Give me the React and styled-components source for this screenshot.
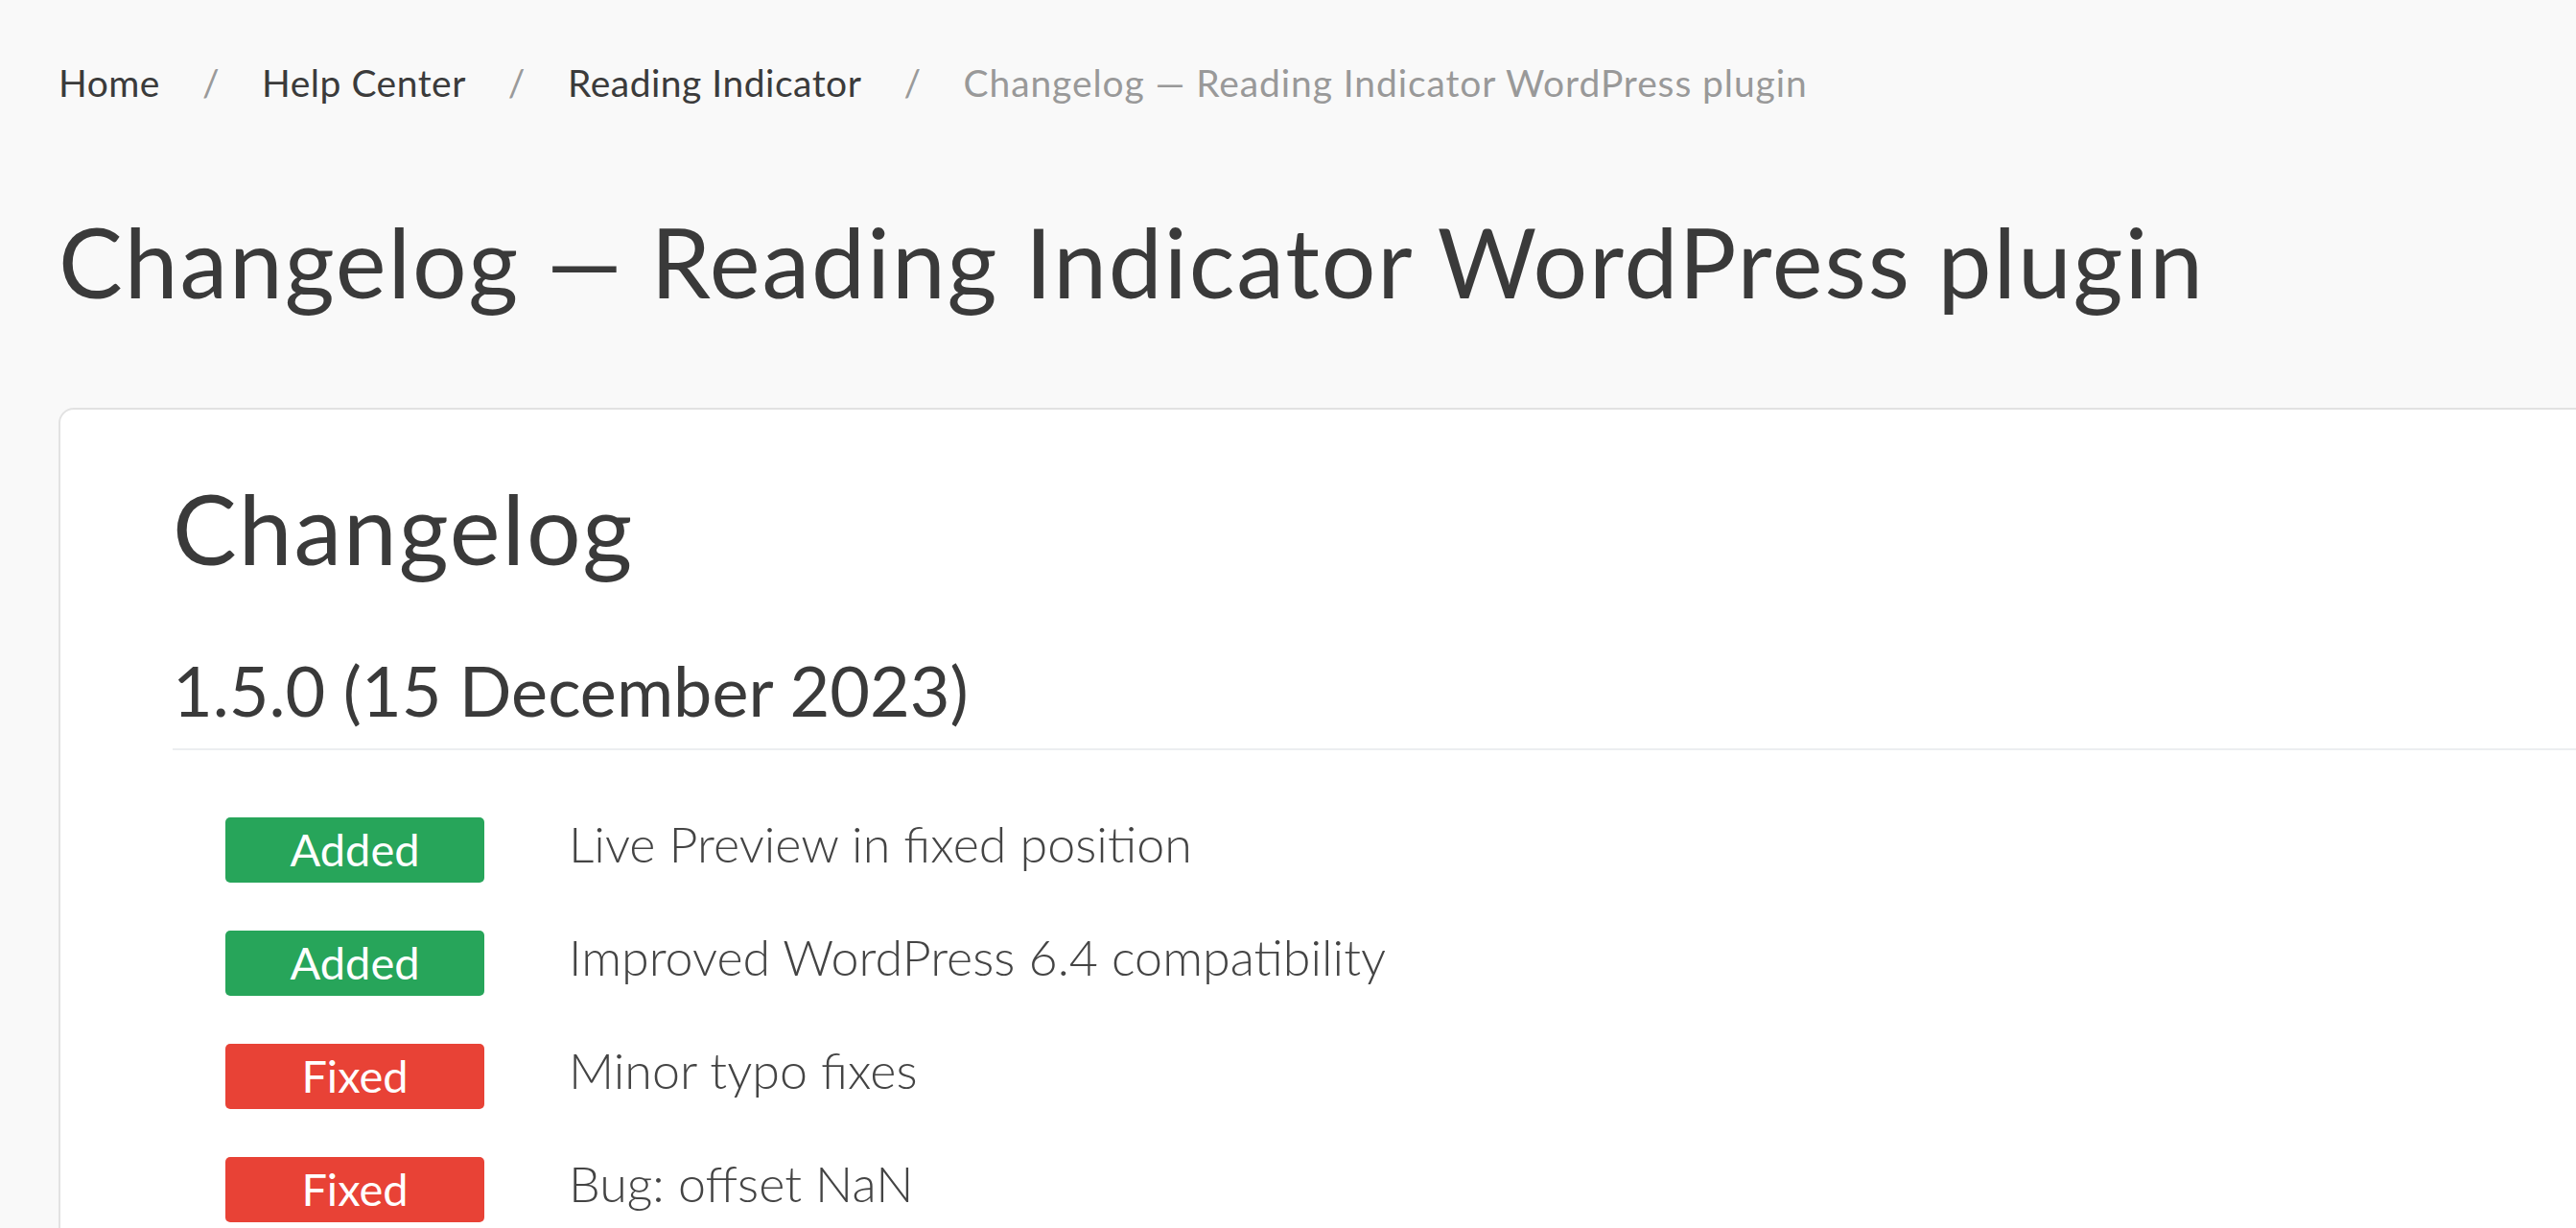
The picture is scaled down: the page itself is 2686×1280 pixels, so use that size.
import React from 'react'
import styled, { createGlobalStyle } from 'styled-components'

const GlobalStyle = createGlobalStyle`
    html, body {
        margin: 0;
        padding: 0;
        background-color: #f9f9f9;
        overflow: hidden;
    }
    body {
        font-family: Lato, "Open Sans", sans-serif;
        color: #3b3b3b;
    }
`

const Page = styled.div`
    display: flex;
    flex-direction: column;
    padding: 58px 0 0 61px;
`
const Crumbs = styled.nav`
    display: flex;
    align-items: center;
    height: 56px;
    font-size: 39px;
    line-height: 56px;
    letter-spacing: 0.5px;
`
const Crumb = styled.span`
    color: ${(props) => props.current ? '#999999' : '#3b3b3b'};
    letter-spacing: ${(props) => props.current ? '0.9px' : '0.5px'};
`
const Slash = styled.span`
    color: #9a9a9a;
    margin: 0 44px;
`
const Title = styled.h1`
    margin: 98px 0 0 0;
    font-size: 100px;
    font-weight: 400;
    line-height: 1.2;
    letter-spacing: 1.9px;
    color: #3a3a3a;
`
const Card = styled.section`
    margin: 93px -60px 0 0;
    padding: 63px 0 200px 117px;
    background-color: #ffffff;
    border: 2px solid #e2e2e2;
    border-radius: 16px;
`
const CardHeading = styled.h2`
    margin: 0;
    font-size: 100px;
    font-weight: 400;
    line-height: 1.2;
    letter-spacing: 1.9px;
    color: #3a3a3a;
`
const Version = styled.h3`
    margin: 66px 0 0 0;
    padding-bottom: 18px;
    font-size: 72px;
    font-weight: 400;
    line-height: 1.2;
    color: #3a3a3a;
    border-bottom: 2px solid #eceef0;
`
const List = styled.ul`
    list-style: none;
    margin: 70px 0 0 0;
    padding: 0 0 0 55px;
    display: flex;
    flex-direction: column;
    gap: 50px;
`
const Row = styled.li`
    display: flex;
    align-items: center;
    height: 68px;
    gap: 88px;
`
const Badge = styled.span`
    flex: none;
    width: 270px;
    height: 68px;
    display: flex;
    align-items: center;
    justify-content: center;
    border-radius: 5px;
    background-color: ${(props) => props.kind === 'fixed' ? '#e84236' : '#27a55a'};
    color: #ffffff;
    font-size: 47px;
    padding-bottom: 3px;
    box-sizing: border-box;
`
const Text = styled.span`
    font-size: 52px;
    font-weight: 300;
    line-height: 62px;
    color: #444444;
    margin-bottom: 14px;
`

const items = [
    { kind: 'added', label: 'Added', text: 'Live Preview in fixed position' },
    { kind: 'added', label: 'Added', text: 'Improved WordPress 6.4 compatibility' },
    { kind: 'fixed', label: 'Fixed', text: 'Minor typo fixes' },
    { kind: 'fixed', label: 'Fixed', text: 'Bug: offset NaN' },
]

const App = () => {
  return (
    <Page>
        <GlobalStyle />
        <Crumbs>
            <Crumb>Home</Crumb>
            <Slash>/</Slash>
            <Crumb>Help Center</Crumb>
            <Slash>/</Slash>
            <Crumb>Reading Indicator</Crumb>
            <Slash>/</Slash>
            <Crumb current>Changelog — Reading Indicator WordPress plugin</Crumb>
        </Crumbs>
        <Title>Changelog — Reading Indicator WordPress plugin</Title>
        <Card>
            <CardHeading>Changelog</CardHeading>
            <Version>1.5.0 (15 December 2023)</Version>
            <List>
                {items.map((item, i) => (
                    <Row key={i}>
                        <Badge kind={item.kind}>{item.label}</Badge>
                        <Text>{item.text}</Text>
                    </Row>
                ))}
            </List>
        </Card>
    </Page>
  )
}

export default App
